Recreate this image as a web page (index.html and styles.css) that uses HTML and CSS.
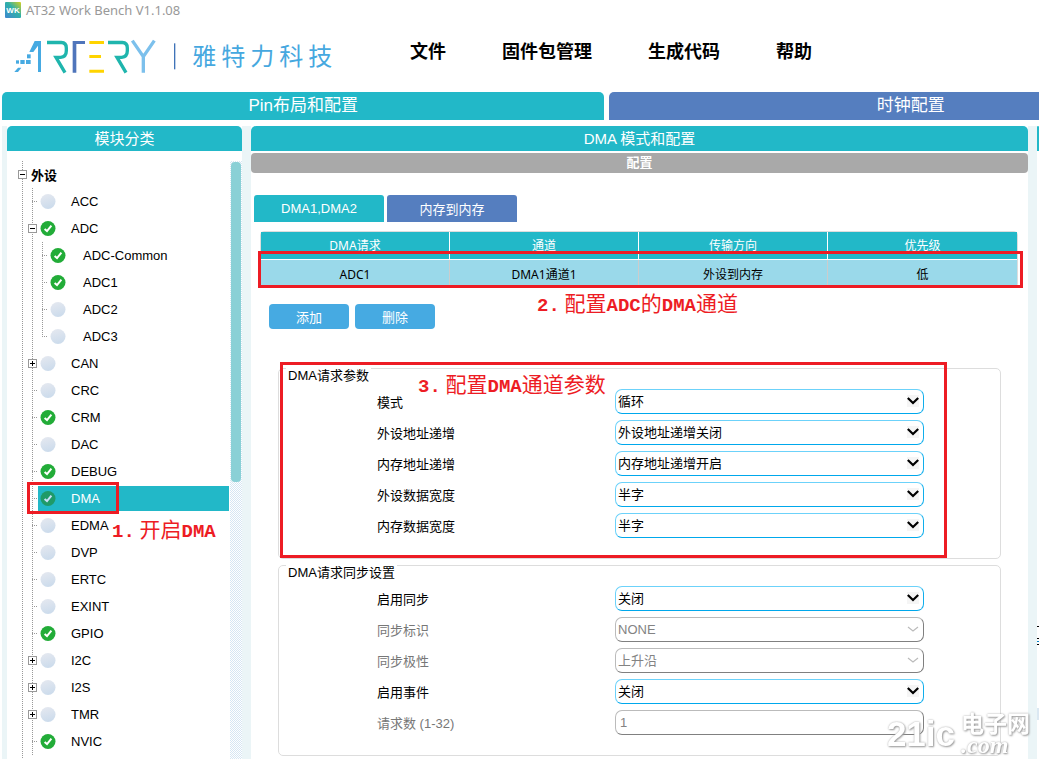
FILE: index.html
```html
<!DOCTYPE html>
<html lang="zh-CN">
  <head>
    <meta charset="UTF-8" />
    <meta name="viewport" content="width=device-width, initial-scale=1.0"/>
    <title>AT32 Work Bench V1.1.08</title>
    <link rel="stylesheet" href="styles.css">
  </head>
  <body>

    <!-- Shared tree icons -->
    <svg class="sprite" width="0" height="0" aria-hidden="true">
      <defs>
        <linearGradient id="offFill" x1="0" y1="0" x2="0.3" y2="1">
          <stop offset="0" stop-color="#e6e9f0"/>
          <stop offset="1" stop-color="#cddcec"/>
        </linearGradient>
      </defs>
      <symbol id="off" viewBox="0 0 16 16">
        <circle cx="8" cy="7.500" r="7.500" fill="url(#offFill)"/>
      </symbol>
      <symbol id="on" viewBox="0 0 16 16">
        <circle cx="8" cy="7.500" r="7.500" fill="currentColor"/>
        <path d="M4.600 8.100 L7 10.100 L11.400 4.700" fill="none" stroke="var(--tick, #fff)" stroke-width="2"/>
      </symbol>
    </svg>

    <div class="title-bar">
      <svg width="16" height="16" viewBox="0 0 16 16" aria-hidden="true">
        <defs>
          <linearGradient id="wk" x1="0" y1="1" x2="1" y2="0">
            <stop offset="0" stop-color="#3f86d0"/>
            <stop offset="0.55" stop-color="#2fb0a8"/>
            <stop offset="1" stop-color="#d8d020"/>
          </linearGradient>
        </defs>
        <rect width="16" height="16" rx="1" fill="url(#wk)"/>
        <text x="8" y="11" text-anchor="middle" class="wk">WK</text>
      </svg>
      <span>AT32 Work Bench V1.1.08</span>
    </div>

    <header class="header">
      <svg class="logo" width="324" height="37" viewBox="39 114 972 111" role="img" aria-label="ARTERY 雅特力科技">
        <g fill="#46aae2">
          <path d="M104 123 H123 V216 H114 V137 L100 156 H88 Z"/>
          <rect x="81" y="163" width="11" height="12"/>
          <rect x="48" y="181" width="9" height="10"/>
          <rect x="61" y="180" width="13" height="12"/>
          <rect x="78" y="180" width="14" height="12"/>
          <path d="M43 216 L54 203 H64 L54 216 Z"/>
        </g>
        <g fill="none" stroke="#1fb5ad" stroke-width="10">
          <path d="M141 127.500 H184 Q199 128 199 144 V152 Q199 170 182 172 H168 L195 218"/>
          <path d="M324 127.500 H367 Q382 128 382 144 V152 Q382 170 365 172 H351 L378 218"/>
        </g>
        <path d="M218 123 H255 V132 H229 V218 H218 Z" fill="#4f75bb"/>
        <path d="M268 123 H312 V132 H268 Z M268 165 H303 V174 H268 Z M268 209 H312 V218 H268 Z" fill="#ffd400"/>
        <path d="M397 122 L430 170 L463 122 M430 168 V218" fill="none" stroke="#7cc0ec" stroke-width="10"/>
        <rect x="522" y="130" width="4" height="78" fill="#3f73b8"/>
        <text x="577 664 751 838 925" y="194" class="brand">雅特力科技</text>
      </svg>
      <nav class="menu">
        <button>文件</button>
        <button>固件包管理</button>
        <button>生成代码</button>
        <button>帮助</button>
      </nav>
    </header>

    <div class="page-tabs">
      <button class="active">Pin布局和配置</button>
      <button>时钟配置</button>
    </div>

    <div class="workspace">
      <aside class="panel">
        <h2 class="panel-title">模块分类</h2>
        <div class="tree-area">
          <div class="tree">
            <div class="row root"><button class="toggle" aria-label="收起"></button><b>外设</b></div>
            <ul class="level">
              <li class="row"><i class="stub"></i><button class="node"><svg><use href="#off"/></svg>ACC</button></li>
              <li>
                <div class="row"><button class="toggle" aria-label="收起"></button><button class="node"><svg><use href="#on"/></svg>ADC</button></div>
                <ul class="level sub">
                  <li class="row"><i class="stub"></i><button class="node"><svg><use href="#on"/></svg>ADC-Common</button></li>
                  <li class="row"><i class="stub"></i><button class="node"><svg><use href="#on"/></svg>ADC1</button></li>
                  <li class="row"><i class="stub"></i><button class="node"><svg><use href="#off"/></svg>ADC2</button></li>
                  <li class="row"><i class="stub"></i><button class="node"><svg><use href="#off"/></svg>ADC3</button></li>
                </ul>
              </li>
              <li class="row"><button class="toggle closed" aria-label="展开"></button><button class="node"><svg><use href="#off"/></svg>CAN</button></li>
              <li class="row"><i class="stub"></i><button class="node"><svg><use href="#off"/></svg>CRC</button></li>
              <li class="row"><i class="stub"></i><button class="node"><svg><use href="#on"/></svg>CRM</button></li>
              <li class="row"><i class="stub"></i><button class="node"><svg><use href="#off"/></svg>DAC</button></li>
              <li class="row"><i class="stub"></i><button class="node"><svg><use href="#on"/></svg>DEBUG</button></li>
              <li class="row marked">
                <i class="stub"></i><button class="node selected"><svg><use href="#on"/></svg>DMA</button>
                <div class="mark mark-module"></div>
                <div class="note note-module"><span>1.</span> 开启<span>DMA</span></div>
              </li>
              <li class="row"><i class="stub"></i><button class="node"><svg><use href="#off"/></svg>EDMA</button></li>
              <li class="row"><i class="stub"></i><button class="node"><svg><use href="#off"/></svg>DVP</button></li>
              <li class="row"><i class="stub"></i><button class="node"><svg><use href="#off"/></svg>ERTC</button></li>
              <li class="row"><i class="stub"></i><button class="node"><svg><use href="#off"/></svg>EXINT</button></li>
              <li class="row"><i class="stub"></i><button class="node"><svg><use href="#on"/></svg>GPIO</button></li>
              <li class="row"><button class="toggle closed" aria-label="展开"></button><button class="node"><svg><use href="#off"/></svg>I2C</button></li>
              <li class="row"><button class="toggle closed" aria-label="展开"></button><button class="node"><svg><use href="#off"/></svg>I2S</button></li>
              <li class="row"><button class="toggle closed" aria-label="展开"></button><button class="node"><svg><use href="#off"/></svg>TMR</button></li>
              <li class="row"><i class="stub"></i><button class="node"><svg><use href="#on"/></svg>NVIC</button></li>
            </ul>
          </div>
          <div class="scrollbar"><div class="thumb"></div></div>
        </div>
      </aside>

      <main class="panel">
        <h2 class="panel-title">DMA 模式和配置</h2>
        <h3 class="section-title">配置</h3>

        <div class="dma-tabs">
          <button class="active">DMA1,DMA2</button>
          <button>内存到内存</button>
        </div>

        <div class="requests">
          <table>
            <thead>
              <tr><th>DMA请求</th><th>通道</th><th>传输方向</th><th>优先级</th></tr>
            </thead>
            <tbody>
              <tr><td>ADC1</td><td>DMA1通道1</td><td>外设到内存</td><td>低</td></tr>
            </tbody>
          </table>
          <div class="mark mark-table"></div>
          <div class="note note-table"><span>2.</span> 配置<span>ADC</span>的<span>DMA</span>通道</div>
        </div>

        <div class="actions">
          <button>添加</button>
          <button>删除</button>
        </div>

        <div class="group">
          <fieldset>
            <legend>DMA请求参数</legend>
            <label for="mode">模式</label>
            <select id="mode"><option>循环</option></select>
            <label for="periphInc">外设地址递增</label>
            <select id="periphInc"><option>外设地址递增关闭</option></select>
            <label for="memInc">内存地址递增</label>
            <select id="memInc"><option>内存地址递增开启</option></select>
            <label for="periphWidth">外设数据宽度</label>
            <select id="periphWidth"><option>半字</option></select>
            <label for="memWidth">内存数据宽度</label>
            <select id="memWidth"><option>半字</option></select>
          </fieldset>
          <div class="mark mark-params"></div>
          <div class="note note-params"><span>3.</span> 配置<span>DMA</span>通道参数</div>
        </div>

        <div class="group">
          <fieldset>
            <legend>DMA请求同步设置</legend>
            <label for="syncOn">启用同步</label>
            <select id="syncOn"><option>关闭</option></select>
            <label for="syncId" class="off">同步标识</label>
            <select id="syncId" disabled><option>NONE</option></select>
            <label for="syncPol" class="off">同步极性</label>
            <select id="syncPol" disabled><option>上升沿</option></select>
            <label for="eventOn">启用事件</label>
            <select id="eventOn"><option>关闭</option></select>
            <label for="reqCount" class="off">请求数 (1-32)</label>
            <input id="reqCount" type="text" value="1" disabled>
          </fieldset>
        </div>
      </main>

      <!-- Edge of the pin view -->
      <section class="panel">
        <div class="panel-title"></div>
        <svg class="pin-edge" width="2" height="100" aria-hidden="true">
          <path d="M0 0 h2 v1 h-2 Z M0 12 h2 v1 h-2 Z M0 18 h2 v1 h-2 Z" fill="#000"/>
          <path d="M0 15 h2 v1 h-2 Z" fill="#0080c8"/>
          <rect y="82" width="2" height="12" fill="#dbe8f2"/>
        </svg>
      </section>
    </div>

    <div class="watermark">
      <span class="wm-name">21ic</span>
      <span class="wm-side"><b>电子网</b><em>.com</em></span>
    </div>

  </body>
</html>
```
FILE: styles.css
```css
* {
  box-sizing: border-box;
}

body {
  margin: 0;
  height: 100vh;
  display: flex;
  flex-direction: column;
  overflow: hidden;
  background-color: #fff;
  color: #000;
  font-family: "Liberation Sans", "Noto Sans CJK SC", sans-serif;
  font-size: 13px;
}

button, select, input {
  font: inherit;
  margin: 0;
}

button {
  border: none;
  padding: 0;
  background: none;
  color: inherit;
  cursor: pointer;
}

.sprite {
  position: absolute;
}

/* Title bar */
.title-bar {
  display: flex;
  align-items: center;
  gap: 5px;
  height: 20px;
  padding-left: 5px;
  color: #999;
  font-family: "Noto Sans", sans-serif;
  font-size: 13px;
}

.wk {
  fill: #fff;
  font-family: "Liberation Sans", sans-serif;
  font-size: 8px;
  font-weight: bold;
}

/* Logo and menu */
.header {
  display: flex;
  align-items: center;
  height: 72px;
  padding-left: 13px;
}

.logo {
  flex: none;
}

.brand {
  fill: #46a8df;
  font-family: "Noto Sans CJK SC", sans-serif;
  font-size: 72px;
  font-weight: 400;
}

.menu {
  display: flex;
  gap: 56px;
  margin-left: 73px;
  padding-bottom: 12px;
}

.menu button {
  font-size: 18px;
  font-weight: bold;
  white-space: nowrap;
}

/* Page tabs */
.page-tabs {
  display: flex;
  gap: 5px;
  padding-left: 2px;
  overflow: hidden;
}

.page-tabs button {
  flex: 0 0 58.1%;
  height: 28px;
  border-radius: 5px 5px 0 0;
  background-color: #557ebf;
  color: white;
  font-size: 17px;
  line-height: 28px;
}

.page-tabs .active,
.dma-tabs .active {
  background-color: #22b8c8;
}

/* Workspace */
.workspace {
  flex: 1;
  min-height: 0;
  display: grid;
  grid-template-columns: 235px 1fr 2px;
  grid-template-rows: 100%;
  gap: 9px;
  margin: 6px 0 0 2px;
  padding-left: 5px;
  background-color: #ebf5f7;
}

.panel {
  display: flex;
  flex-direction: column;
  min-width: 0;
  overflow: hidden;
  background-color: #fff;
}

.panel-title {
  flex: none;
  height: 25px;
  margin: 0;
  border-radius: 5px 5px 0 0;
  background-color: #22b8c8;
  color: white;
  font-size: 15px;
  font-weight: normal;
  line-height: 25px;
  text-align: center;
}

.section-title {
  flex: none;
  height: 20px;
  margin: 2px 0 0;
  border-radius: 4px;
  background-color: #a9a9a9;
  color: white;
  font-size: 13px;
  line-height: 20px;
  text-align: center;
}

/* Module tree */
.tree-area {
  flex: 1;
  min-height: 0;
  display: flex;
  gap: 1px;
  padding-top: 10px;
  overflow: hidden;
}

.tree {
  flex: 1;
  padding-left: 11px;
  background: repeating-linear-gradient(#999 0 1px, transparent 1px 2px) 15px 0 / 1px 100% no-repeat;
}

.level {
  list-style: none;
  margin: 0;
  padding-left: 10px;
  background: repeating-linear-gradient(#999 0 1px, transparent 1px 2px) 14px 0 / 1px 100% no-repeat;
}

.level.sub {
  background-size: 1px calc(100% - 13px);
}

.row {
  display: flex;
  align-items: center;
  height: 27px;
}

.root b {
  padding-left: 3px;
}

.toggle {
  flex: none;
  width: 9px;
  height: 9px;
  margin-right: 1px;
  border: 1px solid #999;
  background: linear-gradient(#000, #000) center / 5px 1px no-repeat #fff;
}

.toggle.closed {
  background:
    linear-gradient(#000, #000) center / 5px 1px no-repeat,
    linear-gradient(#000, #000) center / 1px 5px no-repeat #fff;
}

.stub {
  flex: none;
  width: 9px;
  height: 1px;
  margin-right: 1px;
  background: repeating-linear-gradient(to right, #999 0 1px, transparent 1px 2px) 4px 0 / 5px 1px no-repeat;
}

.node {
  flex: 1;
  display: flex;
  align-items: center;
  gap: 15px;
  height: 25px;
  padding-left: 2px;
}

.sub .node {
  gap: 17px;
}

.node svg {
  width: 16px;
  height: 16px;
  color: #22ac38;
}

.node.selected {
  background-color: #22b8c8;
  color: white;
}

.node.selected svg {
  color: #1f9a68;
  --tick: #c8e0fa;
}

.scrollbar {
  width: 12px;
  padding: 1px;
  background: repeating-conic-gradient(#d6e6f3 0 25%, #fff 0 50%) 0 0 / 2px 2px;
}

.thumb {
  height: 320px;
  border-radius: 4px;
  background-color: #8ad0d6;
}

/* DMA requests */
.dma-tabs {
  display: flex;
  gap: 3px;
  margin: 22px 3px 0;
}

.dma-tabs button {
  width: 130px;
  height: 27px;
  border-radius: 3px 3px 0 0;
  background-color: #557ebf;
  color: white;
}

.requests {
  position: relative;
  margin: 9px 10px 0 9px;
  border: 1px solid #ddd;
  border-radius: 4px;
}

table {
  width: 100%;
  table-layout: fixed;
  border-spacing: 0;
  font-family: "Noto Sans", "Noto Sans CJK SC", sans-serif;
  font-size: 12px;
  line-height: 20px;
}

th, td {
  padding: 0;
  border-right: 1px solid #fff;
  font-weight: normal;
  text-align: center;
}

th {
  height: 28px;
  border-bottom: 1px solid #fff;
  background-color: #22b8c8;
  color: white;
}

td {
  height: 27px;
  padding-top: 2px;
  border-right-color: #ccc;
  background-color: #9ad9ea;
}

th:last-child, td:last-child {
  border-right: none;
}

.actions {
  display: flex;
  gap: 6px;
  margin: 16px 18px 23px;
}

.actions button {
  width: 80px;
  height: 25px;
  border-radius: 4px;
  background-color: #46aae2;
  color: white;
}

/* Parameter groups */
.group {
  position: relative;
  margin: 0 27px;
}

.group + .group {
  margin-top: -10px;
}

fieldset {
  display: grid;
  grid-template-columns: 238px 1fr;
  row-gap: 6px;
  align-items: center;
  min-width: 0;
  margin: 0;
  padding: 5px 76px 20px 98px;
  border: 1px solid #ddd;
  border-radius: 5px;
}

/* top padding drops the caption just under the border line */
legend {
  margin-left: -91px;
  padding: 16px 2px 0;
  line-height: 16px;
}

select, input {
  width: 100%;
  height: 25px;
  padding: 0 20px 0 2px;
  border: 1px solid;
  border-color: #6cd2fa #10aeec #00a8ec #6cd2fa;
  border-radius: 7px;
  background-color: #fff;
  color: #000;
  appearance: none;
}

select {
  background-image: url("data:image/svg+xml,%3Csvg xmlns='http://www.w3.org/2000/svg' width='12' height='12'%3E%3Crect width='12' height='12' fill='%23f5f5f5'/%3E%3Cpath d='M.8 3 L6 8 L11.200 3' fill='none' stroke='%23000' stroke-width='2.200'/%3E%3C/svg%3E");
  background-position: right 4px top 5px;
  background-repeat: no-repeat;
}

select:disabled, input:disabled {
  border-color: #bbb #808080 #808080 #bbb;
  color: #838383;
  opacity: 1;
}

select:disabled {
  background-image: url("data:image/svg+xml,%3Csvg xmlns='http://www.w3.org/2000/svg' width='12' height='12'%3E%3Cpath d='M1 4 L6 8 L11 4' fill='none' stroke='%23bbb' stroke-width='1.200'/%3E%3C/svg%3E");
}

input {
  padding-left: 4px;
}

.off {
  color: #777;
}

.pin-edge {
  flex: none;
  margin-top: 475px;
}

/* Red call-outs */
.marked {
  position: relative;
}

.mark {
  position: absolute;
  border: 3px solid #ed1c24;
  pointer-events: none;
}

.mark-module {
  left: -1px;
  top: -3px;
  width: 92px;
  height: 32px;
}

.mark-table {
  inset: 19px -6px -1px -3px;
}

.mark-params {
  inset: 10px 54px 1px 2px;
}

.note {
  position: absolute;
  color: #ed1c24;
  font-family: "Noto Sans CJK SC", sans-serif;
  font-size: 21px;
  line-height: 24px;
  white-space: pre;
}

.note span {
  font-family: "Liberation Mono", monospace;
  font-size: 19px;
  font-weight: bold;
}

.note-module {
  left: 84px;
  top: 31px;
}

.note-table {
  left: 276px;
  top: 58px;
}

.note-params {
  left: 140px;
  top: 19px;
}

/* Watermark */
.watermark {
  position: fixed;
  right: 9px;
  bottom: 4px;
  display: flex;
  align-items: center;
  gap: 6px;
  color: #fff;
  text-shadow: 0 0 2px #aaa, 1px 1px 2px #999;
  pointer-events: none;
}

.wm-name {
  font-size: 35px;
  font-weight: bold;
  line-height: 40px;
}

.wm-side {
  display: flex;
  flex-direction: column;
}

.wm-side b {
  font-size: 23px;
  line-height: 22px;
}

.wm-side em {
  font-family: "Liberation Serif", serif;
  font-size: 24px;
  font-weight: bold;
  line-height: 20px;
}
```
